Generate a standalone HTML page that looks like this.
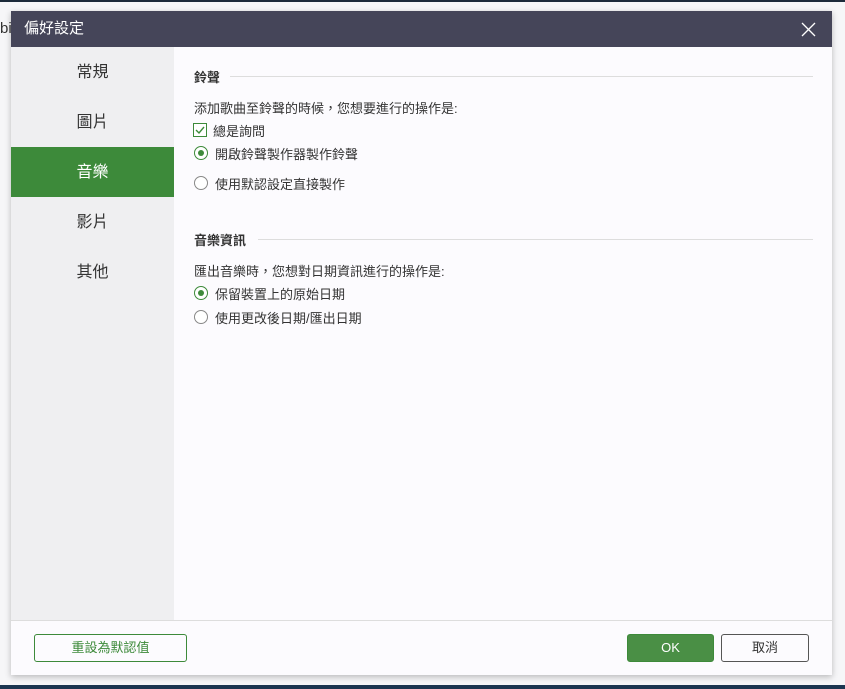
<!DOCTYPE html>
<html><head><meta charset="utf-8"><style>
body{margin:0;width:845px;height:689px;background:#f6f6f8;position:relative;overflow:hidden;font-family:"Liberation Sans","Noto Sans CJK TC",sans-serif;}
.top{position:absolute;left:0;top:0;width:845px;height:2px;background:#1c2a3a}
.bot{position:absolute;left:0;top:685px;width:845px;height:4px;background:#1b3550}
.dlg{position:absolute;left:11px;top:11px;width:821px;height:664px;background:#fcfbfe;box-shadow:0 2px 6px rgba(0,0,0,.25)}
.tb{position:absolute;left:0;top:0;width:821px;height:36px;background:#454559;color:#fff;font-size:15px;line-height:36px;padding-left:13px;box-sizing:border-box}
.side{position:absolute;left:0;top:36px;width:163px;height:573px;background:#efeff1}
.it{height:50px;line-height:52px;text-align:center;font-size:16px;color:#333}
.act{background:#3d8a3a;color:#fff}
.foot{position:absolute;left:0;top:609px;width:821px;border-top:1px solid #ddd}
.c{position:absolute;font-size:13px;color:#333}
.h{font-weight:bold}
.line{position:absolute;height:1px;background:#ddd}
.rad{position:absolute;width:12px;height:12px;border:1px solid #888;border-radius:50%;background:#fff}
.rad.on{border-color:#3d8a3a}
.rad.on::after{content:"";position:absolute;left:3px;top:3px;width:6px;height:6px;border-radius:50%;background:#3d8a3a}
.btn{position:absolute;border:1px solid #3d8a3a;border-radius:3px;text-align:center;line-height:26px;font-size:13px;color:#3d8a3a;box-sizing:border-box;height:28px}
</style></head><body>
<div class="top"></div>
<div class="bot"></div>
<div style="position:absolute;left:0;top:20px;font-size:15px;color:#333">bi</div>
<div class="dlg">
<div class="tb">偏好設定<svg style="position:absolute;right:16px;top:11px" width="15" height="15"><path d="M1 1L14 14M14 1L1 14" stroke="#fff" stroke-width="1.3"/></svg></div>
<div class="side"><div class="it">常規</div><div class="it">圖片</div><div class="it act">音樂</div><div class="it">影片</div><div class="it">其他</div></div>
<div class="foot"></div>
</div>
<div class="c h" style="left:194px;top:67px">鈴聲</div><div class="line" style="left:230px;top:76px;width:583px"></div>
<div class="c" style="left:194px;top:98px">添加歌曲至鈴聲的時候，您想要進行的操作是:</div>
<div style="position:absolute;left:193px;top:123px;width:12px;height:12px;border:1px solid #3d8a3a;background:#fff"><svg width="12" height="12" style="position:absolute;left:0;top:0"><path d="M2 6L5 9L10 3" stroke="#3d8a3a" stroke-width="1.4" fill="none"/></svg></div>
<div class="c" style="left:213px;top:121px">總是詢問</div>
<div class="rad on" style="left:194px;top:146px"></div><div class="c" style="left:215px;top:144px">開啟鈴聲製作器製作鈴聲</div>
<div class="rad" style="left:194px;top:176px"></div><div class="c" style="left:215px;top:174px">使用默認設定直接製作</div>
<div class="c h" style="left:194px;top:230px">音樂資訊</div><div class="line" style="left:258px;top:239px;width:555px"></div>
<div class="c" style="left:194px;top:261px">匯出音樂時，您想對日期資訊進行的操作是:</div>
<div class="rad on" style="left:194px;top:286px"></div><div class="c" style="left:215px;top:284px">保留裝置上的原始日期</div>
<div class="rad" style="left:194px;top:310px"></div><div class="c" style="left:215px;top:308px">使用更改後日期/匯出日期</div>
<div class="btn" style="left:34px;top:634px;width:153px">重設為默認值</div>
<div class="btn" style="left:627px;top:634px;width:87px;background:#4a8f45;color:#fff">OK</div>
<div class="btn" style="left:721px;top:634px;width:88px;border-color:#555;color:#333">取消</div>
</body></html>
